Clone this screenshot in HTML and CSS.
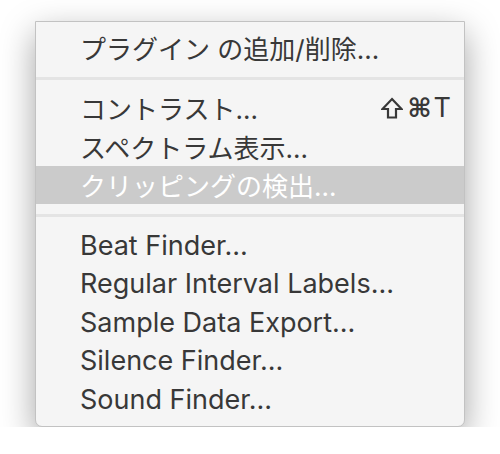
FILE: index.html
```html
<!DOCTYPE html>
<html lang="ja">
<head>
    <meta charset="UTF-8">
    <meta name="viewport" content="width=device-width, initial-scale=1.0">
    <title>Analyze Menu</title>
    <link rel="stylesheet" href="styles.css">
</head>
<body>
    <div class="menu">
        <div class="item">プラグイン の追加/削除...</div>
        <div class="separator"></div>
        <div class="item">
            <span>コントラスト...</span>
            <span class="shortcut">
                <svg class="shift" width="22" height="22" viewBox="0 0 22 22">
                    <path d="M11 2 L20.5 12 L15 12 L15 20.5 L7 20.5 L7 12 L1.5 12 Z" fill="none" stroke="currentColor" stroke-width="2.2" stroke-linejoin="miter"/>
                </svg>
                <span class="cmd">⌘</span>T
            </span>
        </div>
        <div class="item">スペクトラム表示...</div>
        <div class="item selected">クリッピングの検出...</div>
        <div class="separator"></div>
        <div class="item en">Beat Finder...</div>
        <div class="item en">Regular Interval Labels...</div>
        <div class="item en">Sample Data Export...</div>
        <div class="item en">Silence Finder...</div>
        <div class="item en">Sound Finder...</div>
    </div>
</body>
</html>
```

FILE: styles.css
```css
body {
    margin: 0;
    background-color: #fff;
    font-family: Inter, "Noto Sans CJK JP", "DejaVu Sans", sans-serif;
}

.menu {
    width: 428px;
    margin: 21px 0 0 35px;
    padding: 6px 0 7px;
    background-color: #f5f5f5;
    border: 1px solid #c2c2c2;
    border-radius: 0 0 7px 7px;
    box-shadow: 0 12px 34px rgba(0, 0, 0, 0.36);
}

.item {
    display: flex;
    justify-content: space-between;
    align-items: center;
    height: 38.5px;
    padding: 0 13px 0 44px;
    font-size: 26px;
    color: #383838;
}

.item.en {
    font-size: 27px;
}

.item.selected {
    background-color: #cbcbcb;
    color: #fff;
}

.shortcut {
    display: flex;
    align-items: center;
    gap: 5px;
    font-size: 27px;
}

.shift {
    display: block;
    margin-right: -1px;
}

.cmd {
    font-family: "DejaVu Sans", sans-serif;
    font-size: 26px;
    font-weight: bold;
    margin-right: -3px;
}

.separator {
    height: 3px;
    margin: 10px 0 9px;
    background-color: #e4e4e4;
}
```
